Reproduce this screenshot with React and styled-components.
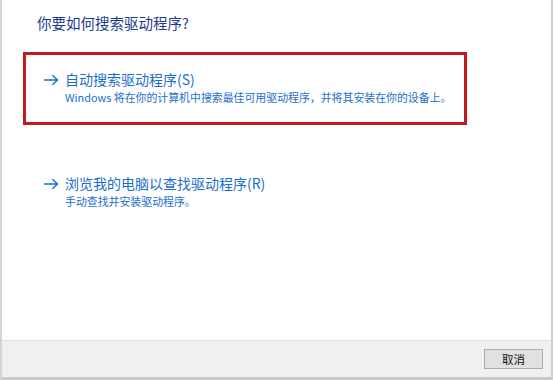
import React from 'react'
import styled, { createGlobalStyle } from 'styled-components'

const GlobalStyle = createGlobalStyle`
  html, body {
    margin: 0;
    padding: 0;
    background: #ffffff;
  }
  body {
    width: 553px;
    height: 380px;
    overflow: hidden;
    font-family: 'Noto Sans CJK SC', 'Noto Sans', sans-serif;
  }
`

const Window = styled.div`
  width: 553px;
  height: 380px;
  box-sizing: border-box;
  display: flex;
  flex-direction: column;
  background: #fff;
  border-left: 2px solid #d4d4d4;
  border-right: 2px solid #cfcfcf;
  border-bottom: 3px solid #c9c9c9;
`

const Content = styled.div`
  flex: 1;
  padding: 12px 0 0 21px;
`

const Title = styled.h1`
  margin: 0 0 18px 14px;
  font-size: 14.5px;
  line-height: 22px;
  font-weight: 400;
  color: #1d3a8a;
`

const OptionList = styled.div`
  display: flex;
  flex-direction: column;
  gap: 31px;
  width: 444px;
`

const Option = styled.div`
  display: flex;
  align-items: flex-start;
  gap: 6px;
  padding: 14px 16px 17px 17px;
  border: 3px solid ${(props) => (props.highlighted ? '#c31a1a' : 'transparent')};
`

const Arrow = styled.svg`
  width: 16px;
  height: 12px;
  margin-top: 5px;
  flex-shrink: 0;
`

const OptionText = styled.div`
  display: flex;
  flex-direction: column;
  color: #1a6fcd;
`

const LinkLabel = styled.div`
  font-size: 14px;
  line-height: 20px;
`

const Note = styled.div`
  font-size: 10.9px;
  line-height: 15px;
  margin-top: 1px;
  white-space: nowrap;
`

const Footer = styled.div`
  height: 37px;
  box-sizing: border-box;
  display: flex;
  align-items: center;
  justify-content: flex-end;
  padding: 0 8px 0 0;
  background: #f0f0f0;
  border-top: 1px solid #e2e2e2;
`

const Button = styled.button`
  width: 59px;
  height: 20px;
  padding: 0;
  margin-top: -1px;
  border: 1px solid #adadad;
  background: #e1e1e1;
  font-family: 'Noto Sans CJK SC', sans-serif;
  font-size: 11.5px;
  line-height: 18px;
  color: #111;
`

const ArrowIcon = () => (
  <Arrow viewBox="0 0 16 12">
    <path d="M1 6 H14.5 M9.5 1.2 L14.5 6 L9.5 10.8" fill="none" stroke="#1a6fcd" strokeWidth="1.4" />
  </Arrow>
)

const options = [
  {
    label: '自动搜索驱动程序(S)',
    note: 'Windows 将在你的计算机中搜索最佳可用驱动程序，并将其安装在你的设备上。',
    highlighted: true,
  },
  {
    label: '浏览我的电脑以查找驱动程序(R)',
    note: '手动查找并安装驱动程序。',
  },
]

export default function App() {
  return (
    <>
      <GlobalStyle />
      <Window>
        <Content>
          <Title>你要如何搜索驱动程序?</Title>
          <OptionList>
            {options.map((opt) => (
              <Option key={opt.label} highlighted={opt.highlighted}>
                <ArrowIcon />
                <OptionText>
                  <LinkLabel>{opt.label}</LinkLabel>
                  <Note>{opt.note}</Note>
                </OptionText>
              </Option>
            ))}
          </OptionList>
        </Content>
        <Footer>
          <Button>取消</Button>
        </Footer>
      </Window>
    </>
  )
}
